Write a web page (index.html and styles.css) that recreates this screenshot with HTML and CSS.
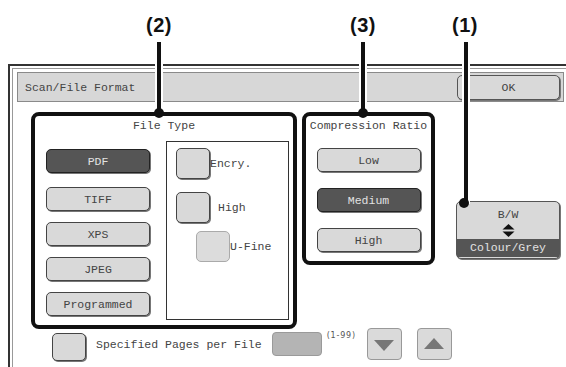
FILE: index.html
```html
<!DOCTYPE html>
<html>
<head>
<meta charset="utf-8">
<link rel="stylesheet" href="styles.css">
</head>
<body>
<div class="page">
  <div class="callouts">
    <span class="callout-num num-2">(2)</span>
    <span class="callout-num num-3">(3)</span>
    <span class="callout-num num-1">(1)</span>
    <span class="callout-line line-2"></span>
    <span class="callout-line line-3"></span>
    <span class="callout-line line-1"></span>
    <span class="callout-dot dot-2"></span>
    <span class="callout-dot dot-3"></span>
    <span class="callout-dot dot-1"></span>
  </div>
  <div class="window">
    <div class="window-inner">
      <div class="titlebar">
        <span class="title">Scan/File Format</span>
        <div class="ok-btn">OK</div>
      </div>
      <div class="settings">
        <section class="group group-filetype">
          <div class="group-label">File Type</div>
          <div class="filetype-body">
            <div class="type-list">
              <div class="btn btn-sel btn-first">PDF</div>
              <div class="btn">TIFF</div>
              <div class="btn">XPS</div>
              <div class="btn">JPEG</div>
              <div class="btn">Programmed</div>
            </div>
            <div class="options-box">
              <div class="opt-row opt-encry"><span class="check"></span><span class="opt-text">Encry.</span></div>
              <div class="opt-row opt-high"><span class="check"></span><span class="opt-text opt-text-gap">High</span></div>
              <div class="opt-row opt-ufine"><span class="check check-off"></span><span class="opt-text">U-Fine</span></div>
            </div>
          </div>
        </section>
        <section class="group group-compress">
          <div class="group-label">Compression Ratio</div>
          <div class="compress-list">
            <div class="btn">Low</div>
            <div class="btn btn-sel">Medium</div>
            <div class="btn">High</div>
          </div>
        </section>
        <div class="colour-col">
          <div class="colour-btn">
            <span class="bw-text">B/W</span>
            <svg class="updown" width="13" height="13" viewBox="0 0 13 13"><polygon points="0.5,5.5 6.5,0 12.5,5.5" fill="#111"/><polygon points="0.5,7.5 6.5,13 12.5,7.5" fill="#111"/></svg>
            <span class="colour-bar">Colour/Grey</span>
          </div>
        </div>
      </div>
      <div class="pages-row">
        <span class="check check-pages"></span>
        <span class="pages-text">Specified Pages per File</span>
        <span class="pages-field"></span>
        <span class="range">(1-99)</span>
        <div class="arrow-btn"><svg width="20" height="11" viewBox="0 0 20 11"><polygon points="0,0 20,0 10,11" fill="#777"/></svg></div>
        <div class="arrow-btn arrow-up"><svg width="20" height="11" viewBox="0 0 20 11"><polygon points="0,11 20,11 10,0" fill="#777"/></svg></div>
      </div>
    </div>
  </div>
</div>
</body>
</html>
```

FILE: styles.css
```css
html, body {
  margin: 0;
  padding: 0;
  background: #fff;
}
body {
  width: 566px;
  height: 367px;
  overflow: hidden;
  font-family: "Liberation Mono", "DejaVu Sans Mono", monospace;
  font-size: 11.5px;
  color: #444;
}
.page {
  position: relative;
  width: 566px;
  height: 367px;
  overflow: hidden;
}

/* callouts (annotations drawn over the UI) */
.callouts {
  position: absolute;
  inset: 0;
  z-index: 5;
  pointer-events: none;
}
.callout-num {
  position: absolute;
  top: 14px;
  width: 40px;
  text-align: center;
  font-family: "Liberation Sans", Arial, sans-serif;
  font-weight: bold;
  font-size: 20px;
  line-height: 22px;
  color: #111;
  letter-spacing: 0.5px;
}
.num-2 { left: 139px; }
.num-3 { left: 343px; }
.num-1 { left: 445px; }
.callout-line {
  position: absolute;
  top: 42px;
  width: 4px;
  background: #111;
  box-shadow: 0 0 0 2px #fff;
}
.line-2 { left: 157px; height: 71px; }
.line-3 { left: 361px; height: 71px; }
.line-1 { left: 464px; height: 160px; }
.callout-dot {
  position: absolute;
  width: 10px;
  height: 10px;
  border-radius: 50%;
  background: #111;
}
.dot-2 { left: 154px; top: 108px; }
.dot-3 { left: 358px; top: 108px; }
.dot-1 { left: 459px; top: 198px; }

/* window frame */
.window {
  position: absolute;
  left: 8px;
  top: 64px;
  width: 600px;
  height: 340px;
  border-top: 2px solid #333;
  border-left: 2px solid #333;
  padding: 2px 0 0 2px;
}
.window-inner {
  height: 100%;
  border-top: 1px solid #999;
  border-left: 1px solid #999;
  padding: 3px 0 0 4px;
}

.titlebar {
  width: 547px;
  height: 30px;
  box-sizing: border-box;
  border: 1px solid #8a8a8a;
  background: #d7d7d7;
  display: flex;
  align-items: center;
  justify-content: space-between;
  padding: 0 3px 0 7px;
}
.ok-btn {
  width: 103px;
  height: 25px;
  box-sizing: border-box;
  border: 1px solid #555;
  border-radius: 5px;
  background: #d9d9d9;
  box-shadow: 1px 1px 0 #777;
  display: flex;
  align-items: center;
  justify-content: center;
  color: #444;
}

.settings {
  display: flex;
  align-items: flex-start;
  margin-top: 10px;
  padding-left: 14px;
}
.group {
  border: 4px solid #111;
  border-radius: 8px;
  box-sizing: border-box;
  background: #fff;
}
.group-label {
  height: 20px;
  line-height: 20px;
  text-align: center;
  white-space: nowrap;
}
.group-filetype {
  width: 266px;
  height: 217px;
}
.filetype-body {
  display: flex;
  margin-top: 5px;
  padding-left: 11px;
  gap: 16px;
}
.type-list {
  display: flex;
  flex-direction: column;
  gap: 11px;
  padding-top: 8px;
}
.btn {
  width: 104px;
  height: 24px;
  box-sizing: border-box;
  border: 1px solid #444;
  border-radius: 5px;
  background: #d9d9d9;
  box-shadow: 1px 1px 0 #777;
  display: flex;
  align-items: center;
  justify-content: center;
  color: #444;
}
.btn-first { margin-bottom: 3px; }
.btn-sel {
  background: #555;
  border-color: #222;
  color: #e2e2e2;
}
.options-box {
  width: 123px;
  height: 179px;
  box-sizing: border-box;
  border: 1px solid #333;
  background: #fff;
  padding: 6px 0 0 9px;
}
.opt-row {
  display: flex;
  align-items: center;
}
.opt-high { margin-top: 13px; }
.opt-ufine { margin-top: 8px; padding-left: 20px; }
.opt-text-gap { margin-left: 8px; }
.check {
  display: block;
  width: 34px;
  height: 31px;
  box-sizing: border-box;
  border: 1px solid #444;
  border-radius: 5px;
  background: #d9d9d9;
  box-shadow: 1px 1px 0 #777;
  flex: none;
}
.check-off {
  border-color: #aaa;
  box-shadow: none;
  background: #dcdcdc;
}

.group-compress {
  width: 133px;
  height: 153px;
  margin-left: 5px;
}
.compress-list {
  display: flex;
  flex-direction: column;
  align-items: center;
  gap: 16px;
  padding-top: 12px;
}

.colour-col {
  margin-left: 21px;
  margin-top: 89px;
}
.colour-btn {
  width: 104px;
  height: 58px;
  box-sizing: border-box;
  border: 1px solid #555;
  border-radius: 5px;
  background: #d9d9d9;
  box-shadow: 1px 1px 0 #777;
  display: flex;
  flex-direction: column;
  align-items: center;
  padding: 6px 0 1px;
}
.bw-text {
  line-height: 14px;
  height: 14px;
}
.updown {
  display: block;
  margin-top: 2px;
}
.colour-bar {
  margin-top: 2px;
  align-self: stretch;
  height: 18px;
  line-height: 18px;
  background: #555;
  color: #e2e2e2;
  text-align: center;
}

.pages-row {
  display: flex;
  align-items: flex-start;
  margin-top: -1px;
  padding-left: 35px;
}
.check-pages {
  margin-top: 5px;
  height: 28px;
}
.pages-text {
  margin-left: 10px;
  margin-top: 10px;
  line-height: 14px;
  white-space: nowrap;
}
.pages-field {
  display: block;
  margin-left: 10px;
  margin-top: 4px;
  width: 50px;
  height: 24px;
  box-sizing: border-box;
  border: 1px solid #9a9a9a;
  border-radius: 4px;
  background: #b4b4b4;
}
.range {
  width: 40px;
  margin-left: 5px;
  margin-top: 2px;
  font-family: "DejaVu Sans", "Liberation Sans", sans-serif;
  font-size: 8px;
  line-height: 11px;
  letter-spacing: 0.8px;
  color: #555;
  white-space: nowrap;
}
.arrow-btn {
  width: 35px;
  height: 32px;
  box-sizing: border-box;
  border: 1px solid #999;
  border-radius: 4px;
  background: #dadada;
  display: flex;
  align-items: center;
  justify-content: center;
}
.arrow-btn svg { display: block; margin-top: 2px; }
.arrow-up { margin-left: 15px; }
.arrow-up svg { margin-top: -2px; }
```
